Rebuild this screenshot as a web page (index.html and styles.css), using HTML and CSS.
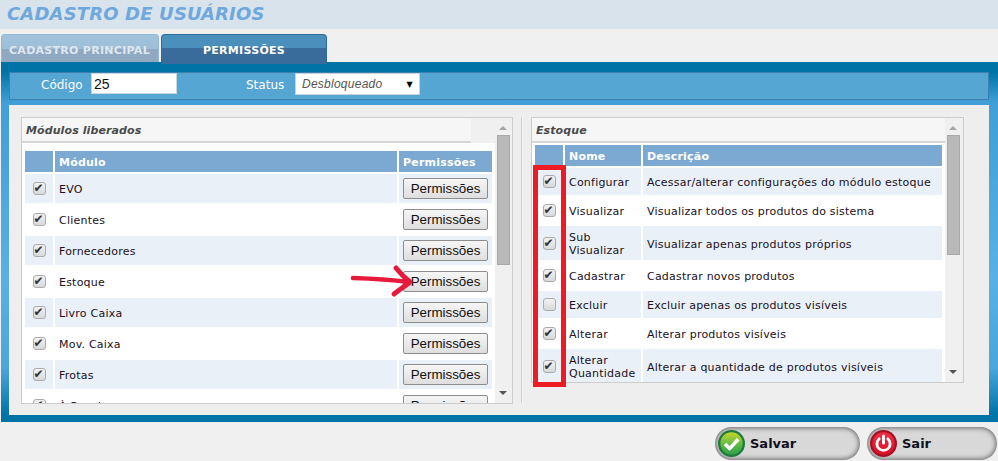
FILE: index.html
```html
<!DOCTYPE html>
<html lang="pt">
<head>
<meta charset="utf-8">
<title>Cadastro de Usuários</title>
<link rel="stylesheet" href="styles.css">
</head>
<body>
<div class="page">
  <header class="title-bar"><h1>CADASTRO DE USUÁRIOS</h1></header>
  <nav class="tabs">
    <div class="tab tab-off">CADASTRO PRINCIPAL</div>
    <div class="tab tab-on">PERMISSÕES</div>
  </nav>
  <main class="frame">
    <div class="filter">
      <label class="lbl lbl-code">Código</label>
      <input class="code" type="text" value="25">
      <label class="lbl lbl-status">Status</label>
      <div class="select"><span>Desbloqueado</span><b>▼</b></div>
    </div>
    <div class="content">
      <section class="pane pane-left">
        <div class="pane-main">
          <div class="pane-head pane-head-left">Módulos liberados</div>
          <table class="grid grid-left">
            <thead><tr><th class="c-check"></th><th class="c-mod">Módulo</th><th class="c-perm">Permissões</th></tr></thead>
            <tbody>
              <tr class="band"><td class="chk"><input type="checkbox" checked></td><td>EVO</td><td class="act"><button>Permissões</button></td></tr>
              <tr><td class="chk"><input type="checkbox" checked></td><td>Clientes</td><td class="act"><button>Permissões</button></td></tr>
              <tr class="band"><td class="chk"><input type="checkbox" checked></td><td>Fornecedores</td><td class="act"><button>Permissões</button></td></tr>
              <tr><td class="chk"><input type="checkbox" checked></td><td>Estoque</td><td class="act"><button>Permissões</button></td></tr>
              <tr class="band"><td class="chk"><input type="checkbox" checked></td><td>Livro Caixa</td><td class="act"><button>Permissões</button></td></tr>
              <tr><td class="chk"><input type="checkbox" checked></td><td>Mov. Caixa</td><td class="act"><button>Permissões</button></td></tr>
              <tr class="band"><td class="chk"><input type="checkbox" checked></td><td>Frotas</td><td class="act"><button>Permissões</button></td></tr>
              <tr><td class="chk"><input type="checkbox" checked></td><td>À Receber</td><td class="act"><button>Permissões</button></td></tr>
            </tbody>
          </table>
        </div>
        <div class="scrollbar scrollbar-left"><i class="arrow-up"></i><i class="thumb thumb-left"></i><i class="arrow-down"></i></div>
      </section>
      <div class="divider"></div>
      <section class="pane pane-right">
        <div class="pane-main">
          <div class="pane-head">Estoque</div>
          <table class="grid grid-right">
            <thead><tr><th class="c-check"></th><th class="c-name">Nome</th><th class="c-desc">Descrição</th></tr></thead>
            <tbody>
              <tr class="band"><td class="chk"><input type="checkbox" checked></td><td>Configurar</td><td>Acessar/alterar configurações do módulo estoque</td></tr>
              <tr><td class="chk"><input type="checkbox" checked></td><td>Visualizar</td><td>Visualizar todos os produtos do sistema</td></tr>
              <tr class="band tall"><td class="chk"><input type="checkbox" checked></td><td>Sub Visualizar</td><td>Visualizar apenas produtos próprios</td></tr>
              <tr><td class="chk"><input type="checkbox" checked></td><td>Cadastrar</td><td>Cadastrar novos produtos</td></tr>
              <tr class="band"><td class="chk"><input type="checkbox"></td><td>Excluir</td><td>Excluir apenas os produtos visíveis</td></tr>
              <tr><td class="chk"><input type="checkbox" checked></td><td>Alterar</td><td>Alterar produtos visíveis</td></tr>
              <tr class="band tall"><td class="chk"><input type="checkbox" checked></td><td>Alterar Quantidade</td><td>Alterar a quantidade de produtos visíveis</td></tr>
            </tbody>
          </table>
        </div>
        <div class="scrollbar scrollbar-right"><i class="arrow-up"></i><i class="thumb thumb-right"></i><i class="arrow-down"></i></div>
      </section>
    </div>
  </main>
  <footer class="actions">
    <button class="pill pill-save">
      <svg class="pill-icon" width="27" height="27" viewBox="0 0 27 27" aria-hidden="true">
        <defs><linearGradient id="gs" x1="0" y1="0" x2="0" y2="1"><stop offset="0" stop-color="#c6d62c"/><stop offset=".55" stop-color="#5dbb46"/><stop offset="1" stop-color="#2f9e4a"/></linearGradient></defs>
        <circle cx="13.5" cy="13.5" r="13.5" fill="#1c7a3c"/>
        <circle cx="13.5" cy="13.5" r="11.2" fill="url(#gs)"/>
        <path d="M7 14 L11.6 18.6 L20.2 9.2" fill="none" stroke="#fff" stroke-width="3.6" stroke-linejoin="round"/>
      </svg>
      <span>Salvar</span>
    </button>
    <button class="pill pill-exit">
      <svg class="pill-icon" width="27" height="27" viewBox="0 0 27 27" aria-hidden="true">
        <defs><linearGradient id="ge" x1="0" y1="0" x2="0" y2="1"><stop offset="0" stop-color="#ee2f45"/><stop offset="1" stop-color="#d9102a"/></linearGradient></defs>
        <circle cx="13.5" cy="13.5" r="13.5" fill="#a80f22"/>
        <circle cx="13.5" cy="13.5" r="11.2" fill="url(#ge)"/>
        <path d="M9.2 8.8 A6.6 6.6 0 1 0 17.8 8.8" fill="none" stroke="#fff" stroke-width="2.8" stroke-linecap="round"/>
        <path d="M13.5 6 V13" fill="none" stroke="#fff" stroke-width="3" stroke-linecap="round"/>
      </svg>
      <span>Sair</span>
    </button>
  </footer>
  <div class="mark-box"></div>
  <svg class="mark-arrow" width="70" height="36" viewBox="0 0 70 36" aria-hidden="true">
    <path d="M4 15 C20 15.5 40 16.5 60 19" fill="none" stroke="#e61b3c" stroke-width="4.6" stroke-linecap="round"/>
    <path d="M47 5 C51 10 56 15 61 19 C56 23 50 27 45 31" fill="none" stroke="#e61b3c" stroke-width="5" stroke-linecap="round" stroke-linejoin="round"/>
  </svg>
</div>
</body>
</html>
```
FILE: styles.css
```css
* { box-sizing: border-box; }
html, body { margin: 0; padding: 0; }
body { background: #f0f0f0; font-family: "DejaVu Sans", Verdana, sans-serif; font-size: 11px; color: #1a1020; }
.page { position: relative; width: 998px; height: 461px; overflow: hidden; }

.title-bar { height: 29px; background: #d9e3ec; padding-left: 7px; }
.title-bar h1 { margin: 0; font-size: 18px; line-height: 27px; letter-spacing: 0.16px; font-style: italic; font-weight: bold; color: #6ea8dc; }

.tabs { display: flex; height: 28px; margin-top: 5px; padding-left: 1px; gap: 2px; position: relative; z-index: 1; }
.tab { height: 28px; border-radius: 4px 4px 0 0; font-weight: bold; font-size: 11px; letter-spacing: 0.28px; }
.tab-off { width: 158px; padding-left: 7px; color: #dfe7ee; background: linear-gradient(#a0c2da 0, #9dbfd8 50%, #8fa9c3 50%, #8fa9c3 100%); border: 1px solid #94b8d2; border-bottom: 0; line-height: 32px; white-space: nowrap; }
.tab-on { width: 166px; height: 30px; text-align: center; color: #fff; background: linear-gradient(#4b8fbc 0, #4b8fbc 45%, #396c9b 45%, #396c9b 100%); border: 1px solid #2f6c9e; border-bottom: 0; line-height: 32px; }

.frame { height: 360px; margin-left: 1px; padding: 10px 9px 7px 8px; background: linear-gradient(#0073a6 0, #0073a6 10px, #3f9fd6 40px, #58b0e6 60%, #4aa6dc 85%, #0073a6 98%, #0073a6 100%); }

.filter { display: flex; align-items: flex-start; height: 28px; background: #55a6d2; border: 1px solid #3d80b0; }
.lbl { color: #fff; font-size: 12px; line-height: 25px; }
.lbl-code { margin-left: 31px; width: 50px; }
.code { width: 86px; height: 21px; margin: 0; padding: 0 2px; border: 1px solid #c8d6e0; background: #fff; font-family: "Liberation Sans", Arial, sans-serif; font-size: 14px; color: #111; outline: 0; }
.lbl-status { margin-left: 69px; width: 49px; }
.select { display: flex; justify-content: space-between; width: 125px; height: 22px; padding: 0 6px 0 6px; background: #fff; border: 1px solid #c8d0d8; font-family: "Liberation Sans", Arial, sans-serif; font-size: 12px; line-height: 21px; letter-spacing: 0.25px; font-style: italic; color: #555; }
.select b { font-style: normal; font-weight: normal; font-size: 8px; color: #000; font-family: "DejaVu Sans", sans-serif; }

.content { display: flex; align-items: flex-start; height: 310px; margin-top: 5px; padding: 12px 0 0 12px; background: #eeeeee; }
.pane { display: flex; border: 1px solid #cccccc; background: #f0f0f0; overflow: hidden; }
.pane-left { width: 492px; height: 287px; }
.pane-right { width: 433px; height: 266px; }
.divider { width: 2px; height: 286px; margin: 0 8px 0 8px; background: #cfcfcf; border-right: 1px solid #f6f6f6; }
.pane-main { flex: 1; min-width: 0; overflow: hidden; background: #fff; }
.pane-head { height: 25px; padding-left: 4px; background: #f6f6f6; border-bottom: 2px solid #d6d6d6; font-weight: bold; font-style: italic; font-size: 11px; line-height: 25px; letter-spacing: 0.1px; color: #4a4a4a; }
.pane-head-left { width: 449px; box-shadow: 24px 0 0 #f0f0f0; }

.grid { table-layout: fixed; border-collapse: separate; border-spacing: 2px; margin-left: 1px; }
.grid-left { width: 471px; margin-top: 6px; }
.grid-right { width: 411px; }
.c-check { width: 28px; }
.c-mod { width: 342px; }
.c-perm { width: 93px; }
.c-name { width: 76px; }
.c-desc { width: 299px; }
th { height: 21px; padding: 2px 4px 0; background: #7ba9d1; color: #fff; font-size: 11px; font-weight: bold; letter-spacing: 0.2px; text-align: left; }
td { padding: 2px 4px 0; font-size: 11px; line-height: 13px; letter-spacing: 0.22px; }
.grid-left td { height: 29px; }
.grid-right td { height: 27px; }
.grid-right .tall td { height: 34px; }
.band td { background: #eaf0f8; }
td.chk { padding: 0; text-align: center; }
td.act { padding: 0; text-align: center; letter-spacing: 0; }

input[type="checkbox"] { appearance: none; display: block; position: relative; width: 13px; height: 13px; margin: 0 auto; border: 1px solid #ababab; border-radius: 3px; background: linear-gradient(#f2f2f2, #d9d9d9); }
input[type="checkbox"]:checked::after { content: "✔"; position: absolute; left: 0; top: -1px; font-family: "DejaVu Sans", sans-serif; font-size: 12px; line-height: 12px; color: #333; }

.act button { display: block; width: 85px; height: 21px; margin: 0 auto; padding: 0 0 1px; border: 1px solid #8d8d8d; border-radius: 2px; background: linear-gradient(#f6f6f6, #dedede); font-family: "Liberation Sans", Arial, sans-serif; font-size: 13.33px; color: #111; }

.scrollbar { display: flex; flex-direction: column; flex: none; background: #f0f0f0; padding-left: 2px; }
.scrollbar-left { width: 17px; }
.scrollbar-right { width: 18px; }
.thumb { display: block; width: 13px; margin-top: 5px; background: #b9b9b9; border: 1px solid #a9a9a9; }
.thumb-left { height: 130px; }
.thumb-right { height: 120px; }
.arrow-up { display: block; width: 0; height: 0; margin: 8px 0 0 2px; border: 4px solid transparent; border-top: 0; border-bottom-color: #a6a6a6; }
.arrow-down { display: block; width: 0; height: 0; margin: auto 0 8px 2px; border: 4px solid transparent; border-bottom: 0; border-top-color: #555; }

.actions { display: flex; justify-content: flex-end; gap: 7px; padding: 5px 1px 0 0; }
.pill { display: flex; align-items: center; gap: 5px; height: 33px; padding: 0 0 0 3px; border: 0; border-radius: 17px; background: #d8d8d8; box-shadow: inset 0 0 5px 1px #666; font-family: "DejaVu Sans", Verdana, sans-serif; font-size: 13px; font-weight: bold; color: #10101c; }
.pill-save { width: 145px; }
.pill-exit { width: 130px; }

.mark-box { position: absolute; left: 533px; top: 165px; width: 33px; height: 222px; border: 5px solid #ed1c24; }
.mark-arrow { position: absolute; left: 349px; top: 263px; }
```
